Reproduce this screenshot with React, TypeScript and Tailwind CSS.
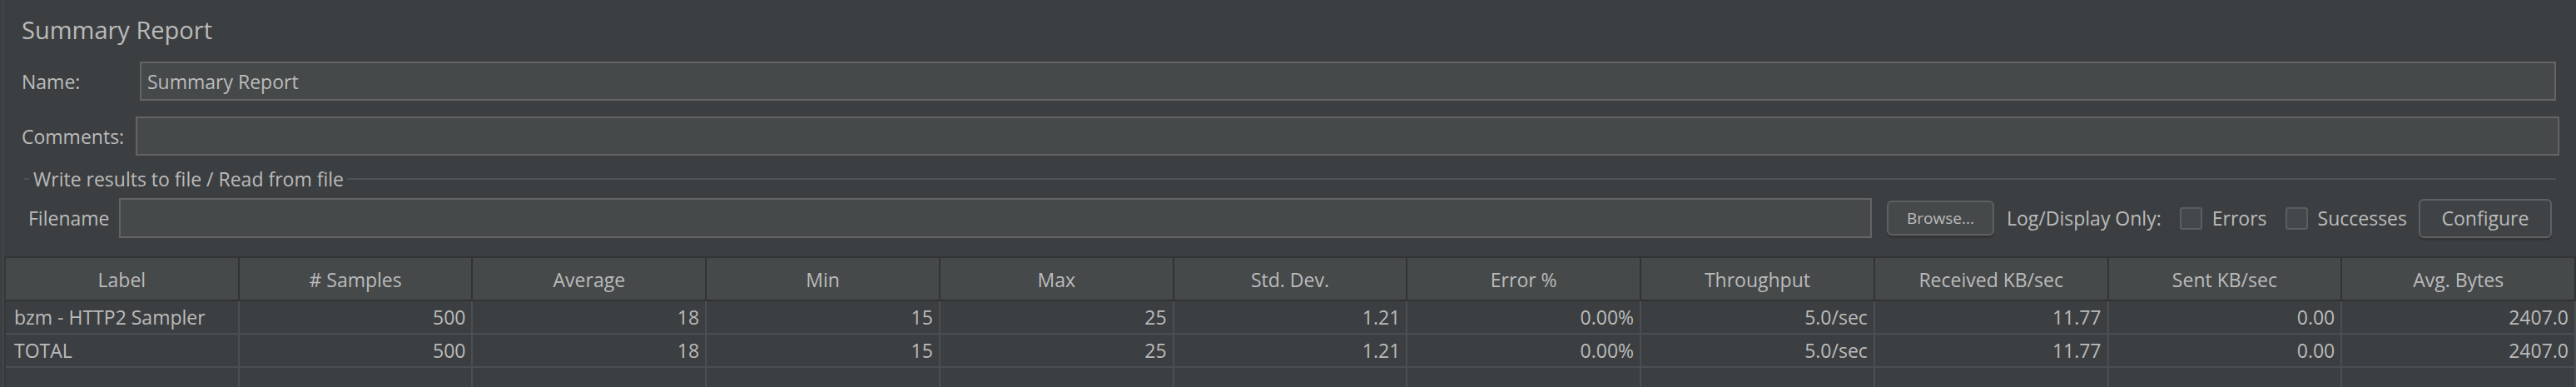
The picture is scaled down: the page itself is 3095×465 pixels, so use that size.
import React from 'react';

const columns = [
  'Label',
  '# Samples',
  'Average',
  'Min',
  'Max',
  'Std. Dev.',
  'Error %',
  'Throughput',
  'Received KB/sec',
  'Sent KB/sec',
  'Avg. Bytes',
];

const rows = [
  ['bzm - HTTP2 Sampler', '500', '18', '15', '25', '1.21', '0.00%', '5.0/sec', '11.77', '0.00', '2407.0'],
  ['TOTAL', '500', '18', '15', '25', '1.21', '0.00%', '5.0/sec', '11.77', '0.00', '2407.0'],
  ['', '', '', '', '', '', '', '', '', '', ''],
];

const Checkbox: React.FC<{ label: string }> = ({ label }) => (
  <label className="flex items-center">
    <span className="w-[27px] h-[27px] rounded-[3px] border-2 border-[#5b5e60] bg-[#43484a]" />
    <span className="ml-[12px]">{label}</span>
  </label>
);

const App: React.FC = () => {
  return (
    <div
      className="w-[3095px] h-[465px] overflow-hidden bg-[#3c3f41] text-[#bbbbbb] flex"
      style={{ fontFamily: '"Open Sans", "Noto Sans", sans-serif' }}
    >
      {/* window edge */}
      <div className="w-[3px] shrink-0" />
      <div className="w-[1px] shrink-0 bg-[#4a4d4f]" />

      <div className="flex-1 flex flex-col">
        {/* Title */}
        <div className="shrink-0 pt-[16px] pl-[22px] h-[56px] text-[29px] leading-[40px]">Summary Report</div>

        {/* Name */}
        <div className="shrink-0 mt-[18px] flex items-center h-[47px] pl-[22px] pr-[24px] text-[23px]">
          <span className="w-[142px] shrink-0 pt-[2px]">Name:</span>
          <div className="flex-1 h-full border-2 border-[#646464] bg-[#45494a] flex items-center px-[7px] pt-[2px]">
            Summary Report
          </div>
        </div>

        {/* Comments */}
        <div className="shrink-0 mt-[19px] flex items-center h-[47px] pl-[22px] pr-[20px] text-[23px]">
          <span className="w-[137px] shrink-0 pt-[2px]">Comments:</span>
          <div className="flex-1 h-full border-2 border-[#646464] bg-[#45494a]" />
        </div>

        {/* Write results group */}
        <div className="shrink-0 mt-[13px] flex items-center h-[30px] pl-[25px] pr-[24px] text-[23px] leading-[30px]">
          <div className="w-[6px] h-[2px] bg-[#4f5254]" />
          <span className="ml-[5px] mr-[4px]">Write results to file / Read from file</span>
          <div className="flex-1 h-[2px] bg-[#4f5254]" />
        </div>

        {/* Filename row */}
        <div className="shrink-0 mt-[8px] flex items-center h-[48px] pl-[30px] pr-[29px] text-[23px]">
          <span className="w-[109px] shrink-0">Filename</span>
          <div className="flex-1 h-full border-2 border-[#646464] bg-[#45494a]" />
          <button className="ml-[18px] w-[129px] h-[42px] rounded-[6px] border-2 border-[#5e6163] bg-[#45494a] text-[19px] shadow-[0_3px_0_#333537] text-[#bbbbbb]">
            Browse...
          </button>
          <span className="ml-[15px]">Log/Display Only:</span>
          <div className="ml-[22px]">
            <Checkbox label="Errors" />
          </div>
          <div className="ml-[22px]">
            <Checkbox label="Successes" />
          </div>
          <button className="ml-[14px] w-[160px] h-[47px] rounded-[6px] border-2 border-[#5e6163] bg-[#3f4345] text-[23px] shadow-[0_3px_0_#333537] text-[#bbbbbb]">
            Configure
          </button>
        </div>

        {/* Table */}
        <div className="shrink-0 mt-[22px] ml-[1px] border-l-2 border-[#36393b] text-[23px]">
          <div className="grid grid-cols-11 h-[54px] border-y-2 border-[#313335] bg-[#45494a]">
            {columns.map((c) => (
              <div key={c} className="flex items-center justify-center border-r-2 border-[#313335] pt-[3px]">
                {c}
              </div>
            ))}
          </div>
          {rows.map((r, i) => (
            <div key={i} className="grid grid-cols-11 h-[40px] border-b-2 border-[#4c4f51]">
              {r.map((v, j) => (
                <div
                  key={j}
                  className={
                    j === 0
                      ? 'flex items-center pl-[10px] border-r-2 border-[#4c4f51] whitespace-nowrap'
                      : 'flex items-center justify-end pr-[7px] border-r-2 border-[#4c4f51] whitespace-nowrap'
                  }
                >
                  {v}
                </div>
              ))}
            </div>
          ))}
        </div>
      </div>
    </div>
  );
};

export default App;
